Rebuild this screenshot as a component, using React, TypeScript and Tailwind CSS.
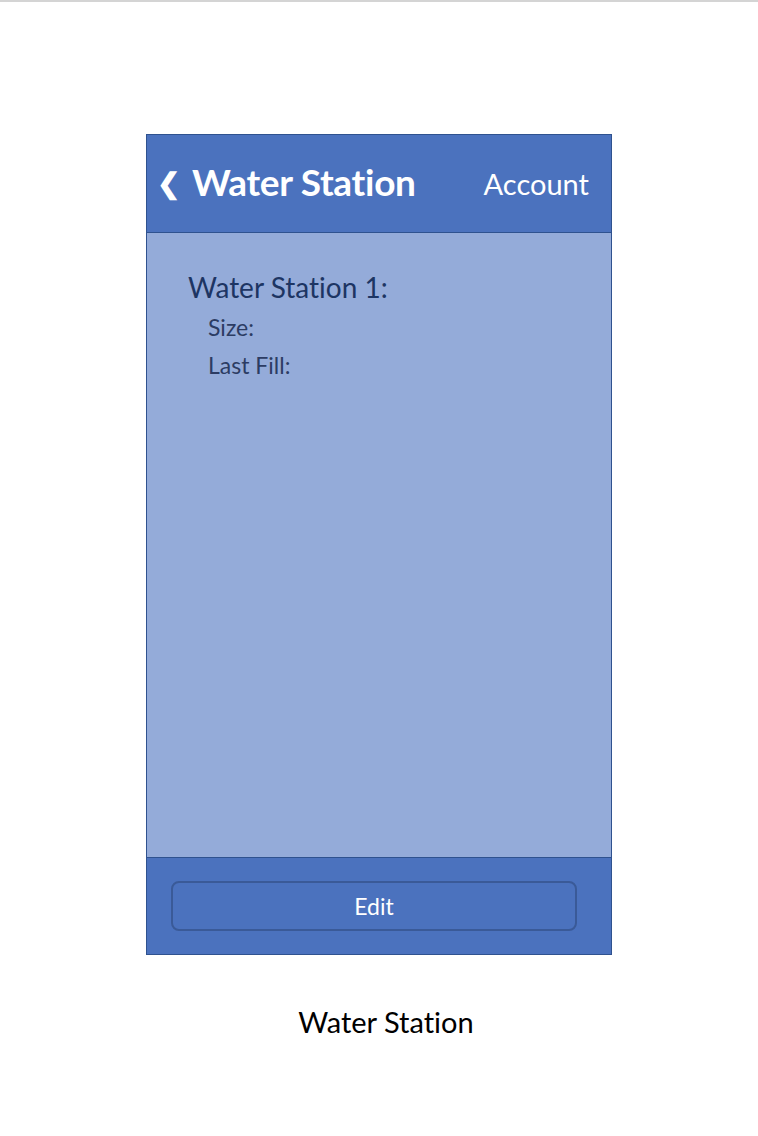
export default function App() {
  return (
    <div
      className="w-[758px] h-[1136px] bg-white border-t-2 border-[#d4d4d4] overflow-hidden [font-variant-ligatures:none]"
      style={{ fontFamily: "Lato, 'Open Sans', sans-serif" }}
    >
      <div className="ml-[146px] mt-[132px] w-[466px] border border-[#2f528f] flex flex-col">
        {/* header */}
        <div className="h-[98px] bg-[#4b72be] border-b border-[#2f528f] flex items-center justify-between pl-[10px] pr-[22px] text-white">
          <div className="flex items-center gap-[12px] -mt-[4px]">
            <span className="text-[28px] font-bold leading-none">❮</span>
            <span className="text-[37px] font-bold leading-none tracking-[-0.3px]">Water Station</span>
          </div>
          <span className="text-[29px] leading-none">Account</span>
        </div>

        {/* body */}
        <div className="h-[624px] bg-[#94abd9] pl-[41px] pt-[40px]">
          <div className="text-[28px] leading-none text-[#1d3563]">Water Station 1:</div>
          <div className="pl-[20px] mt-[15px] flex flex-col gap-[15px] text-[23px] leading-none text-[#2c3c63]">
            <span>Size:</span>
            <span>Last Fill:</span>
          </div>
        </div>

        {/* footer */}
        <div className="h-[97px] bg-[#4b72be] border-t border-[#2f528f] flex items-center justify-center">
          <button className="w-[406px] h-[50px] -ml-[10px] rounded-[8px] border-2 border-[#3a5a98] bg-[#4b72be] text-white text-[23px] leading-none">
            Edit
          </button>
        </div>
      </div>

      <div className="ml-[146px] w-[466px] mt-[52px] text-center text-[29px] leading-none text-black translate-x-[7px]">
        Water Station
      </div>
    </div>
  );
}
